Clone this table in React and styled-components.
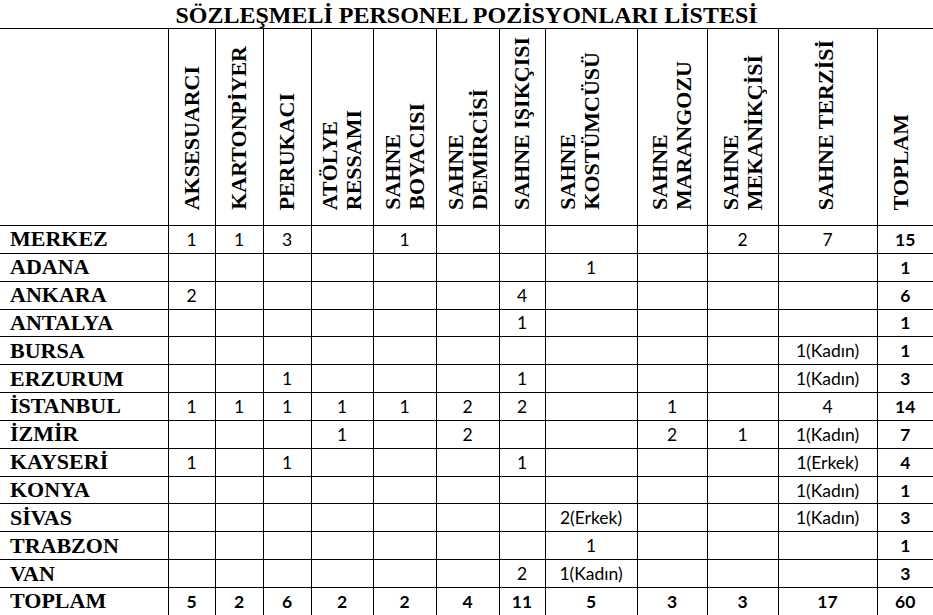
import React from "react";
import styled, { createGlobalStyle } from "styled-components";

const GlobalStyle = createGlobalStyle`
  body {
    margin: 0;
    background: #fff;
    color: #000;
    font-family: "Liberation Serif", "Times New Roman", serif;
  }
`;

const Page = styled.div`
  width: 933px;
  height: 615px;
  overflow: hidden;
`;

const Title = styled.h1`
  margin: 0;
  height: 28px;
  font-size: 24px;
  line-height: 30px;
  font-weight: 700;
  text-align: center;
  white-space: nowrap;
`;

const Table = styled.table`
  border-collapse: collapse;
  table-layout: fixed;
  width: 933px;
`;

const HeadRow = styled.tr`
  height: 197px;
`;

const Row = styled.tr`
  height: 27.85px;
`;

const Cell = styled.td`
  border: 1px solid #000;
  padding: 0;
  text-align: center;
  vertical-align: middle;
  font-family: Lato, "Open Sans", sans-serif;
  font-size: 17.5px;
  font-weight: ${(p) => (p.$bold ? 700 : 400)};
  white-space: nowrap;
  &:first-child {
    border-left: none;
  }
  &:last-child {
    border-right: none;
  }
`;

const NameCell = styled(Cell)`
  text-align: left;
  padding-left: 10px;
  font-family: "Liberation Serif", "Times New Roman", serif;
  font-size: 22px;
  font-weight: 700;
`;

const HeadCell = styled(Cell)`
  vertical-align: bottom;
  padding: 0 ${(p) => p.$nudge || 0}px 11px 0;
`;

const Vertical = styled.span`
  display: inline-block;
  writing-mode: vertical-rl;
  transform: rotate(180deg);
  font-family: "Liberation Serif", "Times New Roman", serif;
  font-size: 22px;
  font-weight: 700;
  line-height: 24px;
  text-align: left;
`;

const widths = [168, 47, 48, 48, 62, 63, 63, 46, 92, 70, 71, 99, 56];

const columns = [
  ["AKSESUARCI"],
  ["KARTONPİYER"],
  ["PERUKACI"],
  ["ATÖLYE", "RESSAMI"],
  ["SAHNE", "BOYACISI"],
  ["SAHNE", "DEMİRCİSİ"],
  ["SAHNE IŞIKÇISI"],
  ["SAHNE", "KOSTÜMCÜSÜ"],
  ["SAHNE", "MARANGOZU"],
  ["SAHNE", "MEKANİKÇİSİ"],
  ["SAHNE TERZİSİ"],
  ["TOPLAM"],
];

// the header labels are not all centred in the source sheet
const nudges = [0, 0, 0, 0, 0, 0, 0, 22, 0, 0, 4, 8];

const rows = [
  ["MERKEZ", 1, 1, 3, "", 1, "", "", "", "", 2, 7, 15],
  ["ADANA", "", "", "", "", "", "", "", 1, "", "", "", 1],
  ["ANKARA", 2, "", "", "", "", "", 4, "", "", "", "", 6],
  ["ANTALYA", "", "", "", "", "", "", 1, "", "", "", "", 1],
  ["BURSA", "", "", "", "", "", "", "", "", "", "", "1(Kadın)", 1],
  ["ERZURUM", "", "", 1, "", "", "", 1, "", "", "", "1(Kadın)", 3],
  ["İSTANBUL", 1, 1, 1, 1, 1, 2, 2, "", 1, "", 4, 14],
  ["İZMİR", "", "", "", 1, "", 2, "", "", 2, 1, "1(Kadın)", 7],
  ["KAYSERİ", 1, "", 1, "", "", "", 1, "", "", "", "1(Erkek)", 4],
  ["KONYA", "", "", "", "", "", "", "", "", "", "", "1(Kadın)", 1],
  ["SİVAS", "", "", "", "", "", "", "", "2(Erkek)", "", "", "1(Kadın)", 3],
  ["TRABZON", "", "", "", "", "", "", "", 1, "", "", "", 1],
  ["VAN", "", "", "", "", "", "", 2, "1(Kadın)", "", "", "", 3],
  ["TOPLAM", 5, 2, 6, 2, 2, 4, 11, 5, 3, 3, 17, 60],
];

const App = () => {
  return (
    <Page>
      <GlobalStyle />
      <Title>SÖZLEŞMELİ PERSONEL POZİSYONLARI LİSTESİ</Title>
      <Table>
        <colgroup>
          {widths.map((w, i) => (
            <col key={i} style={{ width: w }} />
          ))}
        </colgroup>
        <tbody>
          <HeadRow>
            <Cell />
            {columns.map((lines, i) => (
              <HeadCell key={i} $nudge={nudges[i]}>
                <Vertical>
                  {lines.map((l, j) => (
                    <React.Fragment key={j}>
                      {j > 0 && <br />}
                      {l}
                    </React.Fragment>
                  ))}
                </Vertical>
              </HeadCell>
            ))}
          </HeadRow>
          {rows.map((r, i) => {
            const total = i === rows.length - 1;
            return (
              <Row key={r[0]}>
                <NameCell>{r[0]}</NameCell>
                {r.slice(1).map((v, j) => (
                  <Cell key={j} $bold={total || j === r.length - 2}>
                    {v}
                  </Cell>
                ))}
              </Row>
            );
          })}
        </tbody>
      </Table>
    </Page>
  );
};

export default App;
